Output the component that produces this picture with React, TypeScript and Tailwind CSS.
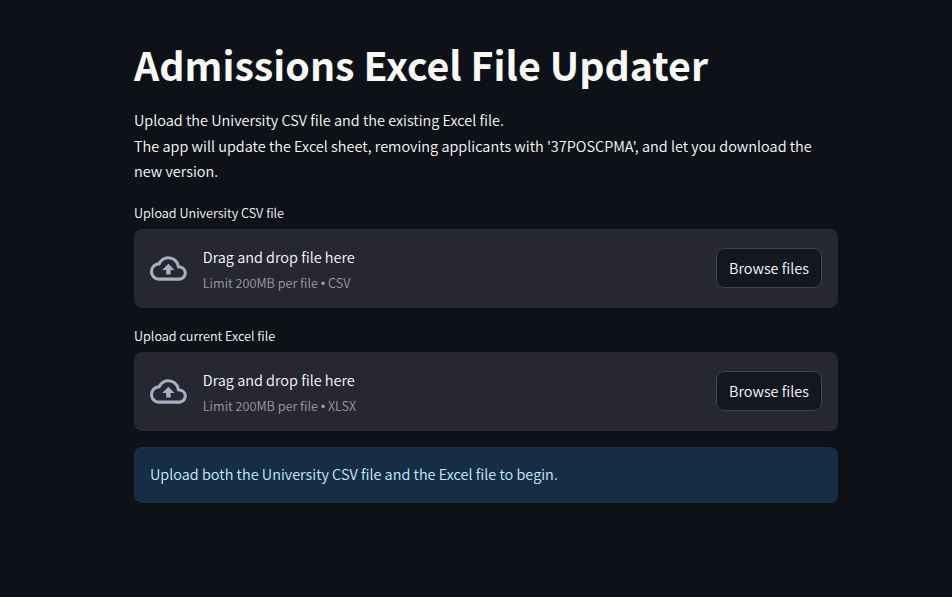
function CloudUploadIcon() {
  return (
    <svg viewBox="0 0 24 24" className="size-[36.8px] shrink-0 fill-[#a9afc3]" aria-hidden="true">
      <path d="M19.35 10.04A7.49 7.49 0 0012 4C9.11 4 6.6 5.64 5.35 8.04A5.994 5.994 0 000 14c0 3.31 2.69 6 6 6h13c2.76 0 5-2.24 5-5 0-2.64-2.05-4.78-4.65-4.96zM19 18H6c-2.21 0-4-1.79-4-4 0-2.05 1.53-3.76 3.56-3.97l1.07-.11.5-.95A5.469 5.469 0 0112 6c2.62 0 4.88 1.86 5.39 4.43l.3 1.5 1.53.11A2.98 2.98 0 0122 15c0 1.65-1.35 3-3 3zM8 13h2.55v3h2.9v-3H16l-4-4-4 4z" />
    </svg>
  );
}

function FileUploader({ label, type }: { label: string; type: string }) {
  return (
    <div className="mb-4">
      <div className="flex h-7 items-center pb-1 text-[12.67px] leading-6">{label}</div>
      <section className="flex h-[79px] items-center rounded-lg bg-[#262730] px-4">
        <CloudUploadIcon />
        <div className="ml-4 flex flex-1 flex-col pt-[2px]">
          <span className="text-[14.48px] leading-[26px]">Drag and drop file here</span>
          <span className="text-[12.67px] leading-[25px] text-[#9c9ca1]">
            Limit 200MB per file <span className="font-['Liberation_Sans',sans-serif] leading-none">•</span> {type}
          </span>
        </div>
        <button className="h-10 w-[106px] rounded-lg border border-[#41444c] bg-[#131720] text-[14.48px]">
          Browse files
        </button>
      </section>
    </div>
  );
}

export default function App() {
  return (
    <main className="min-h-screen bg-[#0e1117] pt-[39px] font-['Noto_Sans_CJK_SC',sans-serif] font-[350] text-[#fafafa]">
      <div className="ml-[134px] w-[704px]">
        <h1 className="mb-[19px] text-[39.35px] leading-[49px] font-bold whitespace-nowrap">Admissions Excel File Updater</h1>
        <p className="mb-[17px] text-[14.48px] leading-[25.6px]">
          Upload the University CSV file and the existing Excel file.
          <br />
          The app will update the Excel sheet, removing applicants with '37POSCPMA', and let you download the
          <br />
          new version.
        </p>
        <FileUploader label="Upload University CSV file" type="CSV" />
        <FileUploader label="Upload current Excel file" type="XLSX" />
        <div className="flex h-14 items-center rounded-lg bg-[#172d43] px-4 pb-[2px] text-[14.48px] text-[#c7ebff]">
          Upload both the University CSV file and the Excel file to begin.
        </div>
      </div>
    </main>
  );
}
